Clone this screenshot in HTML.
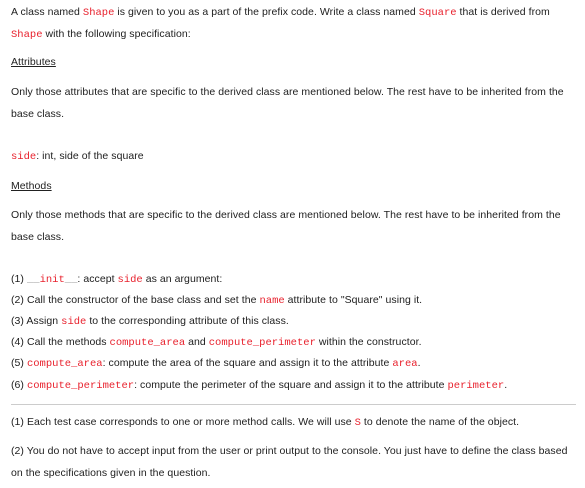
<!DOCTYPE html>
<html><head><meta charset="utf-8"><style>
body{margin:0;width:585px;height:488px;background:#fff;overflow:hidden;font-family:"Liberation Sans",sans-serif;font-size:10.5px;color:#212121;letter-spacing:0.05px}
.l{position:absolute;left:11px;line-height:14px;white-space:nowrap}
code{font-family:"Liberation Mono",monospace;color:#e8212d;font-size:10.5px;letter-spacing:0}
u{text-decoration:underline}
hr{position:absolute;left:11px;width:565px;top:404px;margin:0;border:0;border-top:1px solid #ccc}
</style></head><body>
<div class="l" style="top:5px">A class named <code>Shape</code> is given to you as a part of the prefix code. Write a class named <code>Square</code> that is derived from</div>
<div class="l" style="top:27px"><code>Shape</code> with the following specification:</div>
<div class="l" style="top:55px"><u>Attributes</u></div>
<div class="l" style="top:85px">Only those attributes that are specific to the derived class are mentioned below. The rest have to be inherited from the</div>
<div class="l" style="top:107px">base class.</div>
<div class="l" style="top:149px"><code>side</code>: int, side of the square</div>
<div class="l" style="top:179px"><u>Methods</u></div>
<div class="l" style="top:208px">Only those methods that are specific to the derived class are mentioned below. The rest have to be inherited from the</div>
<div class="l" style="top:230px">base class.</div>
<div class="l" style="top:272px">(1) <code><span style="color:#999">__</span>init<span style="color:#999">__</span></code>: accept <code>side</code> as an argument:</div>
<div class="l" style="top:293px">(2) Call the constructor of the base class and set the <code>name</code> attribute to "Square" using it.</div>
<div class="l" style="top:314px">(3) Assign <code>side</code> to the corresponding attribute of this class.</div>
<div class="l" style="top:335px">(4) Call the methods <code>compute_area</code> and <code>compute_perimeter</code> within the constructor.</div>
<div class="l" style="top:356px">(5) <code>compute_area</code>: compute the area of the square and assign it to the attribute <code>area</code>.</div>
<div class="l" style="top:378px">(6) <code>compute_perimeter</code>: compute the perimeter of the square and assign it to the attribute <code>perimeter</code>.</div>
<hr>
<div class="l" style="top:415px">(1) Each test case corresponds to one or more method calls. We will use <code>S</code> to denote the name of the object.</div>
<div class="l" style="top:444px">(2) You do not have to accept input from the user or print output to the console. You just have to define the class based</div>
<div class="l" style="top:466px">on the specifications given in the question.</div>
</body></html>
